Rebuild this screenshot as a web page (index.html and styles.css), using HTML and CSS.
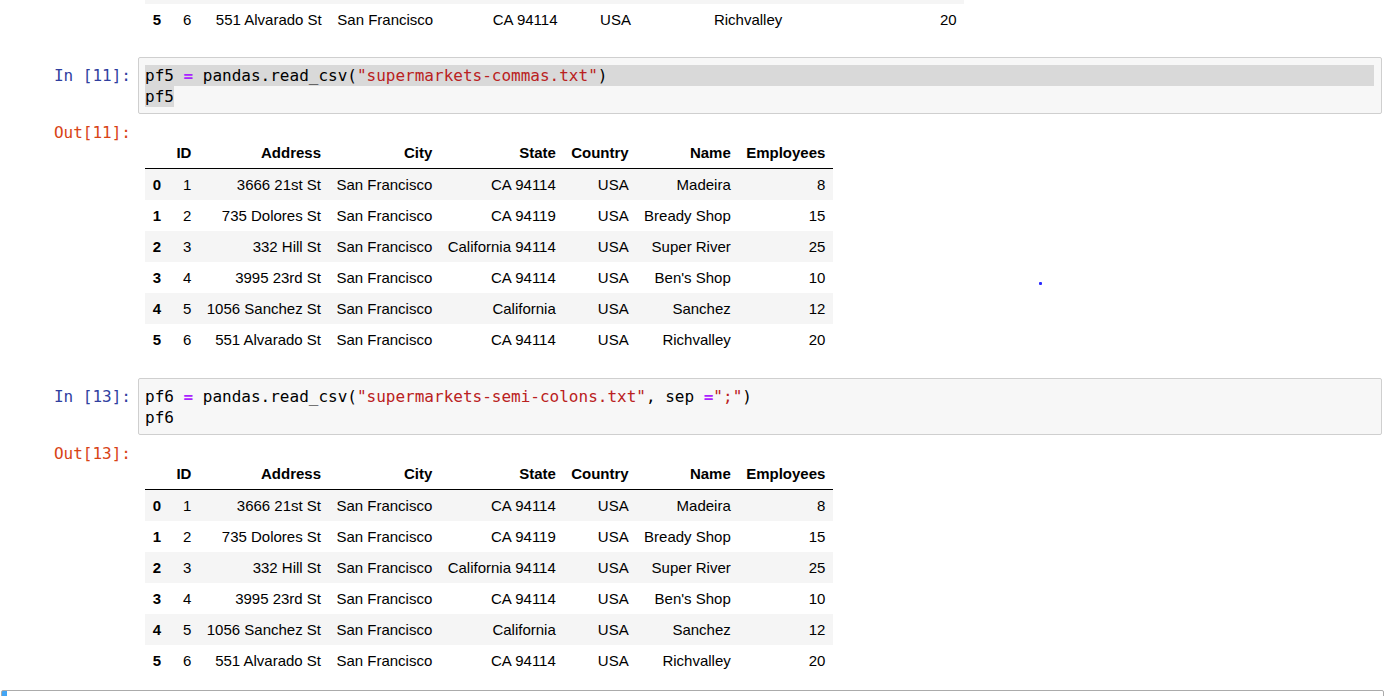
FILE: index.html
```html
<!DOCTYPE html>
<html>
<head>
<meta charset="utf-8">
<title>Notebook</title>
<link rel="stylesheet" href="styles.css">
</head>
<body>
<div class="notebook">

  <div class="cell">
    <div class="output-row">
      <div class="prompt out-prompt"></div>
      <div class="output">
        <table class="df df-top">
          <tbody>
            <tr><th class="c-idx">4</th><td class="c-id">5</td><td class="c-addr">1056 Sanchez St</td><td class="c-city">San Francisco</td><td class="c-state">California</td><td class="c-country">USA</td><td class="c-name">Sanchez</td><td class="c-emp">12</td></tr>
            <tr><th class="c-idx">5</th><td class="c-id">6</td><td class="c-addr">551 Alvarado St</td><td class="c-city">San Francisco</td><td class="c-state">CA 94114</td><td class="c-country">USA</td><td class="c-name">Richvalley</td><td class="c-emp">20</td></tr>
          </tbody>
        </table>
      </div>
    </div>
  </div>

  <div class="cell">
    <div class="input-row">
      <div class="prompt in-prompt">In&nbsp;[11]:</div>
      <div class="code"><div class="line sel">pf5 <span class="op">=</span> pandas.read_csv(<span class="str">"supermarkets-commas.txt"</span>)</div><div class="line"><span class="sel-span">pf5</span></div></div>
    </div>
    <div class="output-row">
      <div class="prompt out-prompt">Out[11]:</div>
      <div class="output out-mid">
        <table class="df">
          <thead>
            <tr><th></th><th>ID</th><th>Address</th><th>City</th><th>State</th><th>Country</th><th>Name</th><th>Employees</th></tr>
          </thead>
          <tbody>
            <tr><th>0</th><td>1</td><td>3666 21st St</td><td>San Francisco</td><td>CA 94114</td><td>USA</td><td>Madeira</td><td>8</td></tr>
            <tr><th>1</th><td>2</td><td>735 Dolores St</td><td>San Francisco</td><td>CA 94119</td><td>USA</td><td>Bready Shop</td><td>15</td></tr>
            <tr><th>2</th><td>3</td><td>332 Hill St</td><td>San Francisco</td><td>California 94114</td><td>USA</td><td>Super River</td><td>25</td></tr>
            <tr><th>3</th><td>4</td><td>3995 23rd St</td><td>San Francisco</td><td>CA 94114</td><td>USA</td><td>Ben's Shop</td><td>10</td></tr>
            <tr><th>4</th><td>5</td><td>1056 Sanchez St</td><td>San Francisco</td><td>California</td><td>USA</td><td>Sanchez</td><td>12</td></tr>
            <tr><th>5</th><td>6</td><td>551 Alvarado St</td><td>San Francisco</td><td>CA 94114</td><td>USA</td><td>Richvalley</td><td>20</td></tr>
          </tbody>
        </table>
      </div>
    </div>
  </div>

  <div class="cell">
    <div class="input-row">
      <div class="prompt in-prompt">In&nbsp;[13]:</div>
      <div class="code"><div class="line">pf6 <span class="op">=</span> pandas.read_csv(<span class="str">"supermarkets-semi-colons.txt"</span>, sep <span class="op">=</span><span class="str">";"</span>)</div><div class="line">pf6</div></div>
    </div>
    <div class="output-row">
      <div class="prompt out-prompt">Out[13]:</div>
      <div class="output out-last">
        <table class="df">
          <thead>
            <tr><th></th><th>ID</th><th>Address</th><th>City</th><th>State</th><th>Country</th><th>Name</th><th>Employees</th></tr>
          </thead>
          <tbody>
            <tr><th>0</th><td>1</td><td>3666 21st St</td><td>San Francisco</td><td>CA 94114</td><td>USA</td><td>Madeira</td><td>8</td></tr>
            <tr><th>1</th><td>2</td><td>735 Dolores St</td><td>San Francisco</td><td>CA 94119</td><td>USA</td><td>Bready Shop</td><td>15</td></tr>
            <tr><th>2</th><td>3</td><td>332 Hill St</td><td>San Francisco</td><td>California 94114</td><td>USA</td><td>Super River</td><td>25</td></tr>
            <tr><th>3</th><td>4</td><td>3995 23rd St</td><td>San Francisco</td><td>CA 94114</td><td>USA</td><td>Ben's Shop</td><td>10</td></tr>
            <tr><th>4</th><td>5</td><td>1056 Sanchez St</td><td>San Francisco</td><td>California</td><td>USA</td><td>Sanchez</td><td>12</td></tr>
            <tr><th>5</th><td>6</td><td>551 Alvarado St</td><td>San Francisco</td><td>CA 94114</td><td>USA</td><td>Richvalley</td><td>20</td></tr>
          </tbody>
        </table>
      </div>
    </div>
  </div>

  <div class="cell selected">
    <div class="input-row">
      <div class="prompt in-prompt">In&nbsp;[&nbsp;]:</div>
      <div class="code"><div class="line">&nbsp;</div></div>
    </div>
  </div>

</div>
<span class="stray-dot"></span>
</body>
</html>
```

FILE: styles.css
```css
html, body {
  margin: 0;
  padding: 0;
  background: #ffffff;
}
body {
  position: relative;
  width: 1394px;
  height: 696px;
  overflow: hidden;
  font-family: "Liberation Sans", Arial, sans-serif;
  color: #000;
}
.notebook {
  width: 1383px;
  margin: -57px 0 0 1px;
}
.cell {
  border: 1px solid transparent;
  padding: 6px 1px 6px 6px;
  border-radius: 2px;
}
.cell.selected {
  border-color: #ababab;
  background: linear-gradient(to right, #42a5f5 0, #42a5f5 5px, transparent 5px, transparent 100%);
}
.input-row,
.output-row {
  display: flex;
  align-items: flex-start;
}
.prompt {
  flex: 0 0 130px;
  box-sizing: border-box;
  padding-right: 7px;
  text-align: right;
  font-family: "DejaVu Sans Mono", monospace;
  font-size: 16px;
  line-height: 21px;
  white-space: nowrap;
}
.in-prompt {
  color: #303f9f;
  padding-top: 8px;
}
.out-prompt {
  color: #d84315;
  padding-top: 8px;
}
.code {
  flex: 1 1 auto;
  background: #f7f7f7;
  border: 1px solid #cfcfcf;
  border-radius: 2px;
  padding: 7px 7px 6px 6px;
  font-family: "DejaVu Sans Mono", monospace;
  font-size: 16px;
  line-height: 21px;
  color: #000;
}
.line {
  height: 21px;
  white-space: pre;
}
.line.sel {
  background: #d9d9d9;
}
.sel-span {
  display: inline-block;
  height: 21px;
  background: #d9d9d9;
}
.op {
  color: #aa22ff;
  font-weight: bold;
}
.str {
  color: #ba2121;
}
.output {
  flex: 1 1 auto;
  padding: 23px 0 8px 7px;
}
.output.out-mid {
  padding-bottom: 9px;
}
.output.out-last {
  padding-bottom: 7px;
}
.df {
  border-collapse: separate;
  border-spacing: 0;
  font-size: 15px;
  line-height: 16px;
  color: #000;
}
.df th,
.df td {
  padding: 8px 7.7px 7px;
  text-align: right;
  white-space: nowrap;
  vertical-align: middle;
}
.df th {
  font-weight: bold;
}
.df thead th {
  border-bottom: 1px solid #000;
}
.df tbody tr:nth-child(odd) {
  background: #f5f5f5;
}
.df-top .c-idx { width: 8px; }
.df-top .c-id { width: 15px; }
.df-top .c-addr { width: 115px; }
.df-top .c-city { width: 96px; }
.df-top .c-state { width: 109px; }
.df-top .c-country { width: 58px; }
.df-top .c-name { width: 136px; }
.df-top .c-emp { width: 159px; }
.stray-dot {
  position: absolute;
  left: 1039px;
  top: 282px;
  width: 3px;
  height: 3px;
  border-radius: 1px;
  background: #2b2bff;
}
```
